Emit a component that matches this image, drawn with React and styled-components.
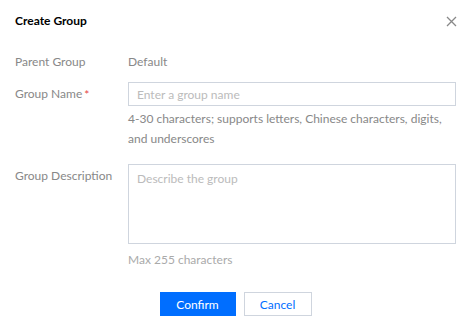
import React from 'react'
import styled, { createGlobalStyle } from 'styled-components'

const GlobalStyle = createGlobalStyle`
	html, body {
		margin: 0;
		padding: 0;
		background: #fff;
	}
	body {
		font-family: Lato, 'Noto Sans', sans-serif;
		font-size: 12px;
		color: #444;
	}
`

const Dialog = styled.div`
	width: 471px;
	height: 328px;
	box-sizing: border-box;
	padding: 11px 15px 0;
	background: #fff;
`
const Header = styled.div`
	display: flex;
	justify-content: space-between;
	align-items: center;
	height: 20px;
`
const Title = styled.h2`
	margin: 0;
	font-size: 12px;
	font-weight: 700;
	color: #000;
	line-height: 20px;
`
const CloseButton = styled.button`
	display: flex;
	align-items: center;
	justify-content: center;
	width: 16px;
	height: 16px;
	padding: 0;
	margin-right: -3px;
	border: none;
	background: none;
	cursor: pointer;
`
const Form = styled.form`
	display: grid;
	grid-template-columns: 113px 1fr;
	row-gap: 8px;
	margin-top: 19px;
`
const Label = styled.label`
	line-height: 24px;
	color: #888;
	white-space: nowrap;
`
const Required = styled.span`
	display: inline-block;
	color: #e54545;
	margin-left: 2px;
	transform: translateY(1px);
`
const Field = styled.div`
	display: flex;
	flex-direction: column;
	margin-bottom: ${({ spacing }) => spacing || 0}px;
`
const Value = styled.div`
	line-height: 24px;
	color: #888;
`
const Input = styled.input`
	box-sizing: border-box;
	width: 100%;
	height: 24px;
	padding: 0 8px;
	border: 1px solid #cfd5de;
	border-radius: 0;
	font: inherit;
	color: #444;
	outline: none;

	&::placeholder {
		color: #bbb;
	}
`
const TextArea = styled.textarea`
	box-sizing: border-box;
	width: 100%;
	height: 80px;
	padding: 4px 8px;
	border: 1px solid #cfd5de;
	border-radius: 0;
	font: inherit;
	line-height: 20px;
	color: #444;
	resize: none;
	outline: none;

	&::placeholder {
		color: #bbb;
	}
`
const Help = styled.p`
	margin: ${({ top }) => top}px 0 0;
	line-height: 20px;
	white-space: nowrap;
	color: ${({ light }) => (light ? '#aaa' : '#888')};
`
const Footer = styled.div`
	display: flex;
	justify-content: center;
	gap: 8px;
	margin-top: 22px;
`
const Button = styled.button`
	box-sizing: border-box;
	height: 24px;
	width: ${({ width }) => width}px;
	padding: 0;
	border: 1px solid ${({ primary }) => (primary ? '#006eff' : '#cfd5de')};
	background: ${({ primary }) => (primary ? '#006eff' : '#fff')};
	color: ${({ primary }) => (primary ? '#fff' : '#006eff')};
	font: inherit;
	cursor: pointer;
`

const CloseIcon = () => (
	<svg width='11' height='11' viewBox='0 0 11 11'>
		<path d='M1 1L10 10M10 1L1 10' stroke='#888' strokeWidth='1.3' fill='none' />
	</svg>
)

const App = () => {
	return (
		<>
			<GlobalStyle />
			<Dialog>
				<Header>
					<Title>Create Group</Title>
					<CloseButton aria-label='Close'>
						<CloseIcon />
					</CloseButton>
				</Header>
				<Form onSubmit={(e) => e.preventDefault()}>
					<Label>Parent Group</Label>
					<Value>Default</Value>

					<Label htmlFor='group-name'>
						Group Name<Required>*</Required>
					</Label>
					<Field spacing={7}>
						<Input id='group-name' placeholder='Enter a group name' />
						<Help top={3}>
							4-30 characters; supports letters, Chinese characters, digits,
							<br />
							and underscores
						</Help>
					</Field>

					<Label htmlFor='group-desc'>Group Description</Label>
					<Field>
						<TextArea id='group-desc' placeholder='Describe the group' />
						<Help top={6} light>
							Max 255 characters
						</Help>
					</Field>
				</Form>
				<Footer>
					<Button primary width={76}>Confirm</Button>
					<Button width={68}>Cancel</Button>
				</Footer>
			</Dialog>
		</>
	)
}

export default App
